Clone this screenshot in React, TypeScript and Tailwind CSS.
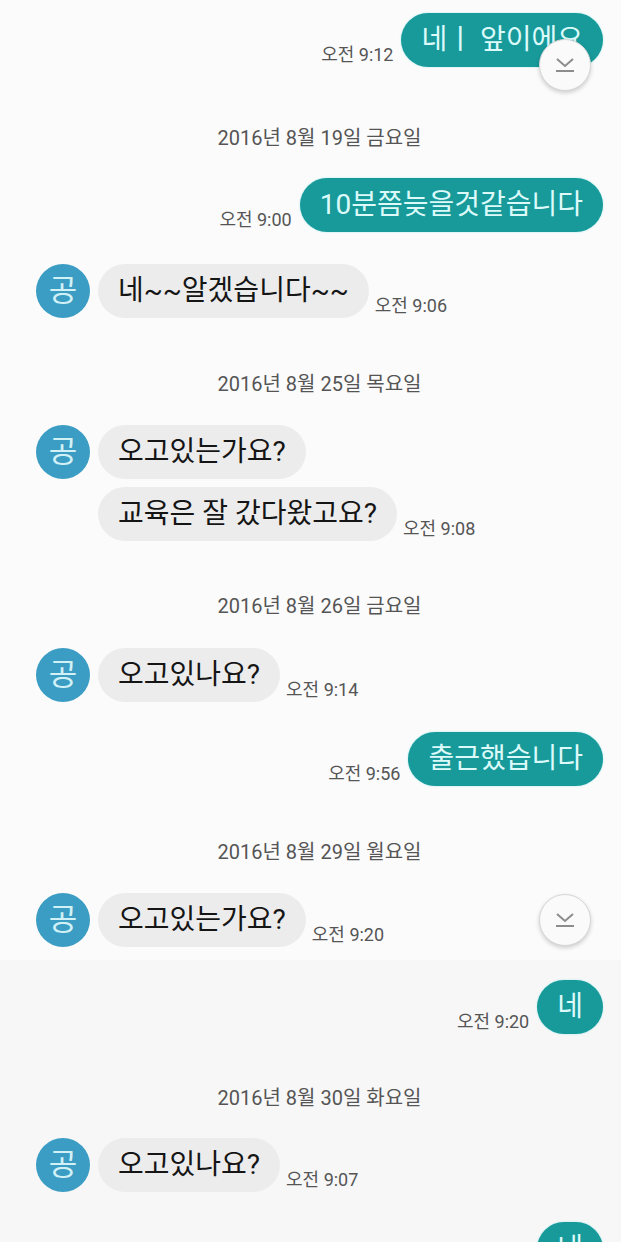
import React from 'react';

const FONT = { fontFamily: 'Roboto, "Noto Sans CJK KR", sans-serif' };

const Time = ({ t }: { t: string }) => (
  <span className="mb-0 text-[18px] leading-[24px] text-[#555] whitespace-nowrap">{t}</span>
);

const Out = ({ text, time, className = '' }: { text: string; time?: string; className?: string }) => (
  <div className={`flex items-end justify-end gap-2 pr-[18px] ${className}`}>
    {time && <Time t={time} />}
    <div className="flex h-[54px] items-center rounded-full bg-[#189a9b] px-5 text-[28px] text-[#dcfafa] shadow-[0_0_2px_#9ee6e6] whitespace-nowrap">
      {text}
    </div>
  </div>
);

const Avatar = () => (
  <div className="flex h-[54px] w-[54px] shrink-0 items-center justify-center rounded-full bg-[#3b9dc3] text-[31px] text-[#d2f1f6]">
    공
  </div>
);

const Bubble = ({ text }: { text: string }) => (
  <div className="flex h-[54px] items-center rounded-full bg-[#ececec] px-5 text-[28px] text-[#151515] whitespace-nowrap">
    {text}
  </div>
);

const In = ({ lines, time, className = '' }: { lines: string[]; time: string; className?: string }) => (
  <div className={`flex items-start gap-2 pl-[36px] ${className}`}>
    <Avatar />
    <div className="flex flex-col gap-[8px]">
      {lines.map((l, i) => (
        <div key={i} className="flex items-end gap-[6px]">
          <Bubble text={l} />
          {i === lines.length - 1 && <Time t={time} />}
        </div>
      ))}
    </div>
  </div>
);

const DateLine = ({ d, className = '' }: { d: string; className?: string }) => (
  <div className={`pl-[18px] text-center text-[20px] leading-[24px] text-[#555] ${className}`}>{d}</div>
);

const ScrollButton = ({ className = '' }: { className?: string }) => (
  <div
    className={`absolute flex h-[52px] w-[52px] items-center justify-center rounded-full border border-[#d6d6d6] bg-[#fafafa] shadow-[0_2px_4px_rgba(0,0,0,0.18)] ${className}`}
  >
    <svg width="22" height="16" viewBox="0 0 22 16" fill="none" stroke="#8c8c8c" strokeWidth="2">
      <polyline points="3,2 11,9 19,2" />
      <line x1="2" y1="14" x2="20" y2="14" />
    </svg>
  </div>
);

export default function App() {
  return (
    <div className="relative h-[1242px] w-[621px] overflow-hidden bg-[#f7f7f7]" style={FONT}>
      <div className="h-[960px] bg-[#fbfbfb] pt-[13px]">
        <Out text="네ㅣ 앞이에요" time="오전 9:12" />
        <DateLine d="2016년 8월 19일 금요일" className="mt-[59px]" />
        <Out text="10분쯤늦을것같습니다" time="오전 9:00" className="mt-[28px]" />
        <In lines={['네~~알겠습니다~~']} time="오전 9:06" className="mt-[32px]" />
        <DateLine d="2016년 8월 25일 목요일" className="mt-[54px]" />
        <In lines={['오고있는가요?', '교육은 잘 갔다왔고요?']} time="오전 9:08" className="mt-[29px]" />
        <DateLine d="2016년 8월 26일 금요일" className="mt-[53px]" />
        <In lines={['오고있나요?']} time="오전 9:14" className="mt-[30px]" />
        <Out text="출근했습니다" time="오전 9:56" className="mt-[30px]" />
        <DateLine d="2016년 8월 29일 월요일" className="mt-[54px]" />
        <In lines={['오고있는가요?']} time="오전 9:20" className="mt-[29px]" />
      </div>
      <div className="pt-[20px]">
        <Out text="네" time="오전 9:20" />
        <DateLine d="2016년 8월 30일 화요일" className="mt-[52px]" />
        <In lines={['오고있나요?']} time="오전 9:07" className="mt-[28px]" />
        <Out text="네" className="mt-[30px]" />
      </div>
      <ScrollButton className="left-[539px] top-[39px]" />
      <ScrollButton className="left-[539px] top-[894px]" />
    </div>
  );
}
